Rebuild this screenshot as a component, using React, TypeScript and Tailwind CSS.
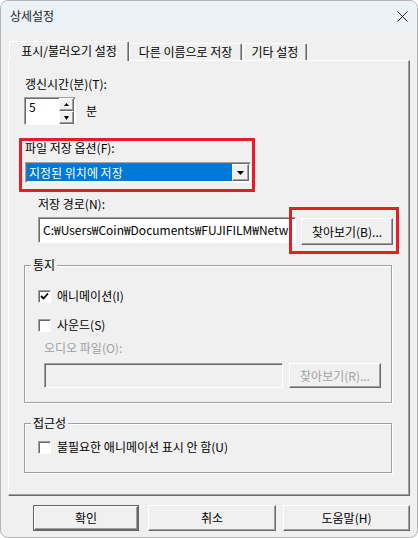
import React from 'react';

const raised =
  'border border-t-white border-l-white border-r-[#696969] border-b-[#696969] shadow-[inset_-1px_-1px_0_#a0a0a0] bg-[#f0f0f0]';
const sunken =
  'border border-t-[#a0a0a0] border-l-[#a0a0a0] border-r-white border-b-white shadow-[inset_1px_1px_0_#696969]';
const groupBox =
  'border border-[#a0a0a0] shadow-[inset_1px_1px_0_white,1px_1px_0_white]';

const DownArrow = ({ w = 7 }: { w?: number }) => (
  <svg width={w} height={4} viewBox={`0 0 ${w} 4`}>
    <polygon points={`0,0 ${w},0 ${w / 2},4`} fill="#000" />
  </svg>
);

const UpArrow = () => (
  <svg width={5} height={3} viewBox="0 0 5 3">
    <polygon points="0,3 5,3 2.5,0" fill="#000" />
  </svg>
);

const Checkbox = ({ checked }: { checked?: boolean }) => (
  <div className={`w-[13px] h-[13px] bg-white flex items-center justify-center ${sunken}`}>
    {checked && (
      <svg width={9} height={9} viewBox="0 0 9 9">
        <polyline points="1,4 3.5,6.5 8,1.5" fill="none" stroke="#000" strokeWidth={1.8} />
      </svg>
    )}
  </div>
);

const GroupLabel = ({ children }: { children: React.ReactNode }) => (
  <div className="-mt-[9px] ml-[6px] px-[2px] w-fit bg-[#f0f0f0] leading-[16px]">{children}</div>
);

export default function App() {
  return (
    <div className="w-[418px] h-[538px] bg-white font-['Noto_Sans_CJK_KR',sans-serif] text-[12px] text-black">
      <div className="w-[418px] h-[538px] rounded-[8px] border border-[#b4b4b4] bg-[#f0f0f0] overflow-hidden flex flex-col">
        {/* title bar */}
        <div className="h-[30px] shrink-0 bg-[#ebf2f8] flex items-center justify-between pl-[9px] pr-[9px]">
          <span className="leading-[16px] text-[#1a1a1a]">상세설정</span>
          <svg width={11} height={11} viewBox="0 0 11 11">
            <path d="M0.5 0.5 L10.5 10.5 M10.5 0.5 L0.5 10.5" stroke="#222" strokeWidth={1} />
          </svg>
        </div>

        {/* tabs */}
        <div className="ml-[7px] mt-[10px] h-[19px] flex items-end shrink-0">
          <div className="relative z-10 ml-[1px] w-[120px] h-[20px] -mb-[1px] bg-[#f0f0f0] border-t border-l border-r border-t-white border-l-white border-r-[#696969] shadow-[inset_-1px_0_0_#a0a0a0] rounded-t-[2px] flex justify-center pt-[1px] leading-[16px]">
            표시/불러오기 설정
          </div>
          <div className="w-[113px] h-[17px] border-t border-l border-r border-t-white border-l-white border-r-[#696969] shadow-[inset_-1px_0_0_#a0a0a0] rounded-t-[2px] flex justify-center leading-[16px]">
            다른 이름으로 저장
          </div>
          <div className="ml-[1px] w-[64px] h-[17px] border-t border-l border-r border-t-white border-l-white border-r-[#696969] shadow-[inset_-1px_0_0_#a0a0a0] rounded-t-[2px] flex justify-center leading-[16px]">
            기타 설정
          </div>
        </div>

        {/* tab panel */}
        <div className="relative ml-[7px] w-[402px] h-[436px] shrink-0 flex flex-col border border-t-white border-l-white border-r-[#696969] border-b-[#696969] shadow-[inset_-1px_-1px_0_#a0a0a0]">
          <div className="ml-[16px] mt-[15px] leading-[16px]">갱신시간(분)(T):</div>
          <div className="ml-[15px] mt-[5px] flex items-center">
            <div className={`w-[52px] h-[28px] bg-white flex ${sunken}`}>
              <span className="flex-1 pl-[4px] pt-[1px] leading-[16px]">5</span>
              <div className="flex flex-col w-[15px] mr-[1px]">
                <div className={`h-[13px] flex items-center justify-center ${raised}`}>
                  <UpArrow />
                </div>
                <div className={`h-[13px] flex items-center justify-center ${raised}`}>
                  <DownArrow w={5} />
                </div>
              </div>
            </div>
            <span className="ml-[10px] leading-[16px]">분</span>
          </div>

          <div className="ml-[16px] mt-[15px] leading-[16px]">파일 저장 옵션(F):</div>
          <div className={`ml-[16px] mt-[6px] w-[226px] h-[21px] bg-white flex p-[1px] ${sunken}`}>
            <div className="flex-1 bg-[#0078d7] text-white leading-[16px] pl-[2px] pt-[1px]">지정된 위치에 저장</div>
            <div className={`w-[17px] flex items-center justify-center ${raised}`}>
              <DownArrow />
            </div>
          </div>

          <div className="ml-[29px] mt-[13px] leading-[16px]">저장 경로(N):</div>
          <div className="ml-[29px] mt-[5px] flex items-start">
            <div className={`w-[258px] h-[26px] bg-white flex items-center pl-[4px] overflow-hidden whitespace-nowrap ${sunken}`}>
              C:₩Users₩Coin₩Documents₩FUJIFILM₩Netw
            </div>
            <div className={`ml-[5px] mt-[1px] w-[92px] h-[27px] flex items-center justify-center leading-[16px] ${raised}`}>
              찾아보기(B)...
            </div>
          </div>

          {/* 통지 */}
          <div className={`ml-[15px] mt-[20px] w-[368px] h-[138px] flex flex-col ${groupBox}`}>
            <GroupLabel>통지</GroupLabel>
            <div className="ml-[13px] mt-[15px] flex items-center h-[16px]">
              <Checkbox checked />
              <span className="ml-[6px] leading-[16px]">애니메이션(I)</span>
            </div>
            <div className="ml-[13px] mt-[13px] flex items-center h-[16px]">
              <Checkbox />
              <span className="ml-[6px] leading-[16px]">사운드(S)</span>
            </div>
            <div className="ml-[19px] mt-[7px] leading-[16px] text-[#a0a0a0]">오디오 파일(O):</div>
            <div className="ml-[19px] mt-[7px] flex">
              <div className={`w-[239px] h-[25px] bg-[#f0f0f0] ${sunken}`} />
              <div className={`ml-[6px] w-[92px] h-[25px] flex items-center justify-center leading-[16px] text-[#a0a0a0] ${raised}`}>
                찾아보기(R)...
              </div>
            </div>
          </div>

          {/* 접근성 */}
          <div className={`ml-[15px] mt-[20px] w-[368px] h-[50px] flex flex-col ${groupBox}`}>
            <GroupLabel>접근성</GroupLabel>
            <div className="ml-[13px] mt-[8px] flex items-center h-[16px]">
              <Checkbox />
              <span className="ml-[6px] leading-[16px]">불필요한 애니메이션 표시 안 함(U)</span>
            </div>
          </div>

          {/* annotation boxes */}
          <div className="absolute left-[10px] top-[77px] w-[236px] h-[54px] border-[3px] border-[#e81c24]" />
          <div className="absolute left-[280px] top-[146px] w-[110px] h-[47px] border-[3px] border-[#e81c24]" />
        </div>

        {/* dialog buttons */}
        <div className="mt-[9px] flex shrink-0">
          <div className="ml-[32px] w-[106px] h-[26px] border border-[#646464] flex">
            <div className={`flex-1 flex items-center justify-center leading-[16px] ${raised}`}>확인</div>
          </div>
          <div className={`ml-[9px] w-[128px] h-[26px] flex items-center justify-center leading-[16px] ${raised}`}>취소</div>
          <div className={`ml-[7px] w-[127px] h-[26px] flex items-center justify-center leading-[16px] ${raised}`}>도움말(H)</div>
        </div>
      </div>
    </div>
  );
}
